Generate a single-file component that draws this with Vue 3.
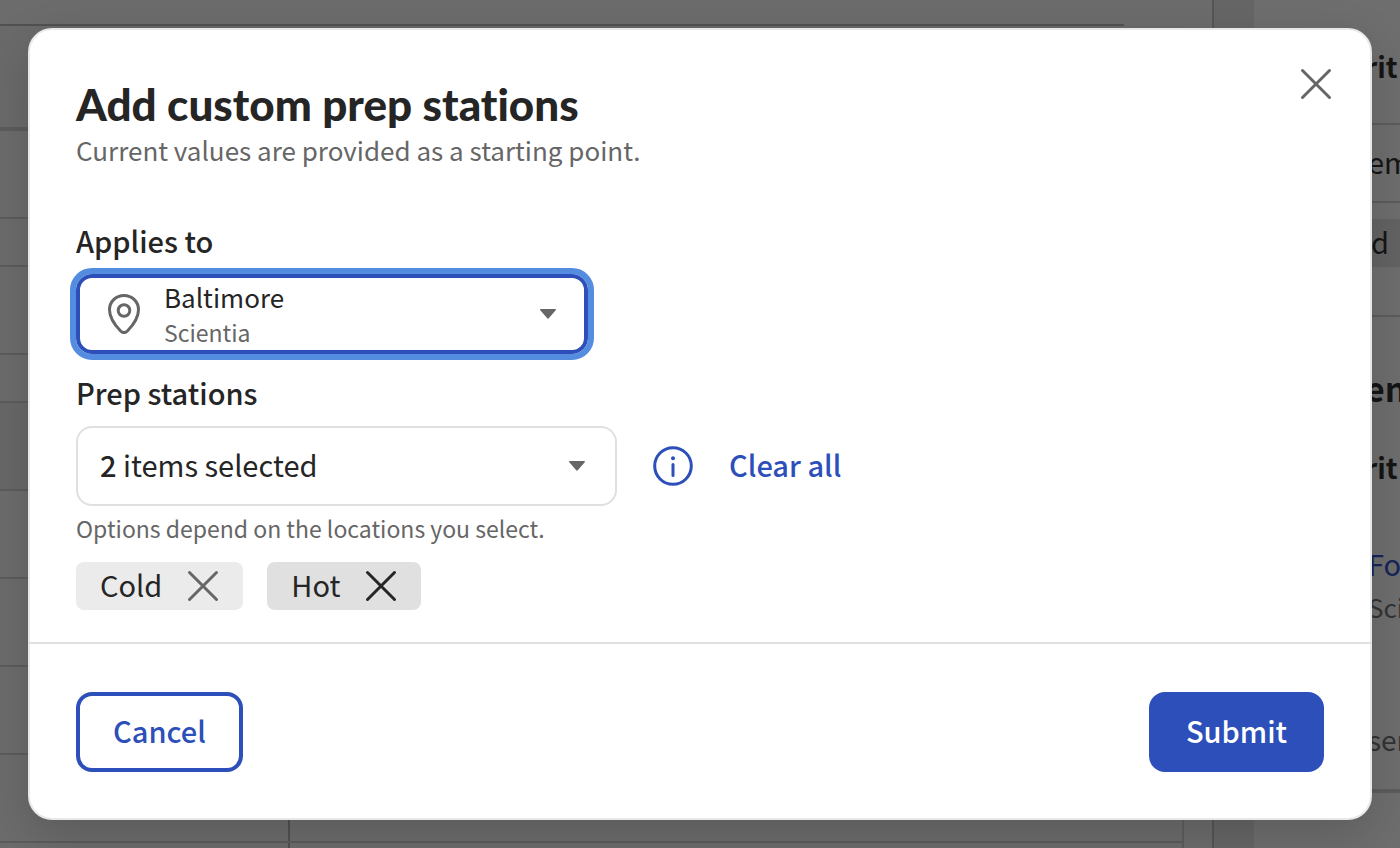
<script setup>
import { ref } from 'vue'

const tableRows = ref([
  { id: 1, size: 'row-head' },
  { id: 2, size: 'row-tall' },
  { id: 3, size: 'row-short' },
  { id: 4, size: 'row-tall' },
  { id: 5, size: 'row-short' },
  { id: 6, size: 'row-tall row-shaded' },
  { id: 7, size: 'row-tall' },
  { id: 8, size: 'row-tall' },
  { id: 9, size: 'row-tall' },
  { id: 10, size: 'row-tall split' },
  { id: 11, size: 'row-tall split' },
])

const stations = ref([
  { name: 'Cold', active: false },
  { name: 'Hot', active: true },
])

function remove(name) {
  stations.value = stations.value.filter((s) => s.name !== name)
}
</script>

<template>
  <div class="screen">
    <div class="backdrop" aria-hidden="true">
      <div class="page-main">
        <div class="page-top"></div>
        <div class="page-table">
          <div v-for="row in tableRows" :key="row.id" class="row" :class="row.size"></div>
        </div>
      </div>
      <div class="page-gutter"></div>
      <div class="page-side">
        <div class="side-row side-title strong">rit</div>
        <div class="side-row side-item">em</div>
        <div class="side-row side-chip"><span>d</span></div>
        <div class="side-row side-heading strong">en</div>
        <div class="side-row side-sub strong">rit</div>
        <div class="side-row side-link">Fo</div>
        <div class="side-row side-note">Sci</div>
        <div class="side-row side-last">sen</div>
      </div>
    </div>

    <div class="modal" role="dialog" aria-modal="true" aria-labelledby="dialog-title">
      <header class="modal-header">
        <div class="heading">
          <h1 id="dialog-title">Add custom prep stations</h1>
          <p>Current values are provided as a starting point.</p>
        </div>
        <button type="button" class="close" aria-label="Close">
          <svg width="32" height="32" viewBox="0 0 32 32">
            <path d="M2.5 2.5L29.5 29.5M29.5 2.5L2.5 29.5" />
          </svg>
        </button>
      </header>

      <div class="modal-body">
        <label id="applies-label" class="label" for="applies">Applies to</label>
        <button id="applies" type="button" class="picker picker-focused" aria-haspopup="listbox" aria-labelledby="applies-label applies-value">
          <svg class="pin" width="32" height="40" viewBox="0 0 32 40">
            <path d="M16 1.5C7.8 1.5 1.5 7.9 1.5 15.8C1.5 23.5 7.2 31.5 12.6 37C14.7 39 17.3 39 19.4 37C24.8 31.5 30.5 23.5 30.5 15.8C30.5 7.9 24.2 1.5 16 1.5Z" />
            <circle cx="16" cy="16.5" r="5.8" />
          </svg>
          <span id="applies-value" class="picker-text">
            <span class="place">Baltimore</span>
            <span class="company">Scientia</span>
          </span>
          <svg class="caret" width="16" height="10" viewBox="0 0 16 10">
            <path d="M0.6 0H15.4C16 0 16.2 .8 15.7 1.2L9 9.1C8.4 9.8 7.6 9.8 7 9.1L.3 1.2C-.2 .8 0 0 .6 0Z" />
          </svg>
        </button>

        <label id="stations-label" class="label label-second" for="stations">Prep stations</label>
        <div class="station-line">
          <button id="stations" type="button" class="picker picker-stations" aria-haspopup="listbox" aria-labelledby="stations-label stations-value">
            <span id="stations-value" class="picker-text count"><span><b>{{ stations.length }}</b> items selected</span></span>
            <svg class="caret" width="16" height="10" viewBox="0 0 16 10">
              <path d="M0.6 0H15.4C16 0 16.2 .8 15.7 1.2L9 9.1C8.4 9.8 7.6 9.8 7 9.1L.3 1.2C-.2 .8 0 0 .6 0Z" />
            </svg>
          </button>
          <button type="button" class="info" aria-label="More information">
            <svg width="40" height="40" viewBox="0 0 40 40">
              <circle class="ring" cx="20" cy="20" r="18.3" />
              <circle class="dot" cx="20" cy="12.2" r="2" />
              <path d="M20 18.5V29.5" />
            </svg>
          </button>
          <button type="button" class="clear" @click="stations = []">Clear all</button>
        </div>
        <p class="hint">Options depend on the locations you select.</p>
        <ul class="chips">
          <li v-for="s in stations" :key="s.name" class="chip" :class="{ active: s.active }">
            <span>{{ s.name }}</span>
            <button type="button" :aria-label="'Remove ' + s.name" @click="remove(s.name)">
              <svg width="32" height="32" viewBox="0 0 32 32">
                <path d="M2.5 2.5L29.5 29.5M29.5 2.5L2.5 29.5" />
              </svg>
            </button>
          </li>
        </ul>
      </div>

      <footer class="modal-footer">
        <button type="button" class="btn btn-outline">Cancel</button>
        <button type="button" class="btn btn-solid">Submit</button>
      </footer>
    </div>
  </div>
</template>

<style>
body {
  background: #6c6c6c;
}
</style>

<style scoped>
* {
  box-sizing: border-box;
}

.screen {
  position: relative;
  min-height: 100vh;
  padding: 28px;
  overflow: hidden;
  color: #252525;
  font-family: "Noto Sans CJK SC", "Noto Sans", sans-serif;
  font-size: 29px;
  line-height: 40px;
}

button {
  margin: 0;
  padding: 0;
  border: 0;
  background: none;
  color: inherit;
  font: inherit;
  cursor: pointer;
}

h1,
p,
ul {
  margin: 0;
  padding: 0;
}

svg {
  display: block;
  flex: none;
  fill: none;
  stroke: currentColor;
  stroke-width: 3;
  stroke-linecap: round;
}

/* Dimmed page behind the dialog */
.backdrop {
  position: absolute;
  inset: 0;
  display: flex;
  overflow: hidden;
  background: #6e6e6e;
}

.page-main {
  flex: 1;
  background: #6c6c6c;
  border-right: 2px solid #565656;
}

.page-top {
  height: 26px;
  margin-right: 88px;
  border-bottom: 2px solid #515151;
}

.page-table {
  margin-right: 28px;
}

.row {
  border-bottom: 2px solid #5c5c5c;
}

.row-head {
  height: 105px;
  border-bottom-width: 4px;
  background: #6a6a6a;
}

.row-short {
  height: 48px;
}

.row-tall {
  height: 88px;
}

.row-shaded {
  background: #686868;
}

.split {
  border-right: 2px solid #5e5e5e;
}

.split::before {
  content: "";
  display: block;
  width: 288px;
  height: 100%;
  border-right: 2px solid #505050;
}

.page-gutter {
  width: 40px;
  background: #666666;
}

.page-side {
  width: 146px;
  color: #151515;
  white-space: nowrap;
}

.side-row {
  display: flex;
  align-items: center;
  padding: 0 0 4px 114px;
}

.strong {
  font-size: 28px;
  font-weight: 700;
}

.side-title {
  height: 125px;
  padding: 8px 0 0 111px;
  border-bottom: 2px solid #5c5c5c;
}

.side-item {
  height: 78px;
  border-bottom: 2px solid #5c5c5c;
}

.side-chip {
  height: 114px;
  padding: 16px 0 48px;
  border-bottom: 2px solid #5c5c5c;
}

.side-chip span {
  flex: 1;
  height: 48px;
  padding-left: 117px;
  line-height: 44px;
  background: #636363;
}

.side-heading {
  height: 146px;
  padding-left: 111px;
  font-size: 34px;
}

.side-sub {
  height: 12px;
  padding-left: 111px;
}

.side-link {
  height: 180px;
  color: #16245a;
}

.side-note {
  height: 0;
  margin-top: -48px;
  color: #333333;
  font-size: 26px;
}

.side-last {
  height: 182px;
  padding-top: 82px;
  border-bottom: 4px solid #5c5c5c;
  color: #333333;
  font-size: 28px;
}

/* Dialog */
.modal {
  position: relative;
  border: 2px solid #e8e8e8;
  border-radius: 24px;
  background: #ffffff;
  box-shadow: 0 16px 48px rgba(0, 0, 0, 0.16);
}

.modal-header {
  display: flex;
  justify-content: space-between;
  align-items: flex-start;
  padding: 30px 30px 0 46px;
}

.heading {
  padding-top: 20px;
}

h1 {
  font-family: Lato, sans-serif;
  font-size: 44px;
  font-weight: 900;
  font-variant-ligatures: none;
  line-height: 48px;
}

.heading p {
  margin-top: 4px;
  color: #666666;
  font-size: 26px;
  line-height: 36px;
}

.close {
  display: grid;
  place-items: center;
  width: 48px;
  height: 48px;
  color: #666666;
}

.modal-body {
  padding: 54px 46px 32px;
}

.label {
  display: block;
  width: fit-content;
  margin-bottom: 16px;
  font-weight: 500;
  line-height: 36px;
}

.label-second {
  margin-top: 20px;
}

.picker {
  display: flex;
  align-items: center;
  width: 512px;
  max-width: 100%;
  height: 80px;
  padding: 0 28px;
  border: 4px solid #2c4fba;
  border-radius: 16px;
  background: #ffffff;
  text-align: left;
}

.picker-focused {
  outline: 6px solid #548de0;
}

.picker-stations {
  flex: 0 1 541px;
  padding: 0 30px 0 22px;
  border: 2px solid #e0e0e0;
}

.pin {
  color: #666666;
  margin-right: 24px;
}

.picker-text {
  display: flex;
  flex: 1;
  flex-direction: column;
}

.picker-text b {
  font-weight: 500;
}

.count {
  padding-bottom: 4px;
}

.place {
  font-size: 26px;
  line-height: 36px;
}

.company {
  color: #666666;
  font-size: 23px;
  line-height: 34px;
}

.caret {
  color: #666666;
  fill: currentColor;
  stroke: none;
}

.station-line {
  display: flex;
  align-items: center;
}

.info {
  margin: 0 36px;
  color: #2c4fba;
}

.info .dot {
  fill: currentColor;
  stroke: none;
}

.clear {
  padding-bottom: 4px;
  color: #2c4fba;
  font-weight: 500;
}

.hint {
  margin-top: 6px;
  color: #666666;
  font-size: 23px;
  line-height: 32px;
}

.chips {
  display: flex;
  flex-wrap: wrap;
  gap: 24px;
  margin-top: 18px;
  list-style: none;
}

.chip {
  display: flex;
  align-items: center;
  gap: 25px;
  height: 48px;
  padding: 0 24px;
  border-radius: 8px;
  background: #ebebeb;
}

.chip span {
  padding-bottom: 4px;
}

.chip button {
  color: #666666;
}

.chip.active {
  background: #e0e0e0;
}

.chip.active button {
  color: #252525;
}

.modal-footer {
  display: flex;
  justify-content: space-between;
  margin: 0 -2px;
  padding: 48px 48px 46px;
  border-top: 2px solid #e0e0e0;
}

.btn {
  height: 80px;
  padding: 0 33px 4px;
  border: 4px solid #2c4fba;
  border-radius: 16px;
  font-weight: 500;
}

.btn-outline {
  background: #ffffff;
  color: #2c4fba;
}

.btn-solid {
  background: #2c4fba;
  color: #ffffff;
}
</style>
